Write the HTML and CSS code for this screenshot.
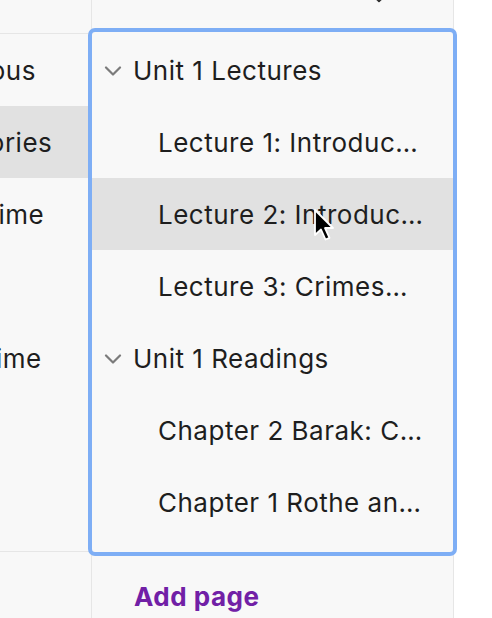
FILE: index.html
```html
<!DOCTYPE html>
<html>
<head>
<meta charset="utf-8">
<link rel="stylesheet" href="styles.css">
</head>
<body>
<div class="screen">
  <div class="left">
    <div class="left-inner">
      <div class="left-head"></div>
      <div class="left-list">
        <div class="left-row">Various</div>
        <div class="left-row active">Theories</div>
        <div class="left-row">Anytime</div>
        <div class="left-row"></div>
        <div class="left-row">Lifetime</div>
        <div class="left-row"></div>
        <div class="left-row"></div>
      </div>
    </div>
  </div>
  <div class="middle">
    <div class="mid-head">
      <svg class="sort-icon" width="16" height="12" viewBox="0 0 16 12"><path d="M8 -6 V5 M3 0 L8 5 L13 0" fill="none" stroke="#333" stroke-width="2.4" stroke-linecap="round" stroke-linejoin="round"/></svg>
    </div>
    <div class="tree">
      <div class="group">
        <svg class="chev" width="18" height="10" viewBox="0 0 18 10"><path d="M2 1.5 L9 8.5 L16 1.5" fill="none" stroke="#7b7b7b" stroke-width="2.2" stroke-linecap="round" stroke-linejoin="round"/></svg>
        <span class="label">Unit 1 Lectures</span>
      </div>
      <div class="item"><span class="label">Lecture 1: Introduction to Criminology</span></div>
      <div class="item hover"><span class="label">Lecture 2: Introduction to Theory</span>
        <svg class="cursor" width="22" height="34" viewBox="0 0 22 34"><path d="M2 2 L2 27 L8 21.5 L12.5 31.5 L16.5 29.8 L12 20 L20 20 Z" fill="#000" stroke="#fff" stroke-width="1.8" stroke-linejoin="round"/></svg>
      </div>
      <div class="item"><span class="label">Lecture 3: Crimes—Definitions and Measurement</span></div>
      <div class="group">
        <svg class="chev" width="18" height="10" viewBox="0 0 18 10"><path d="M2 1.5 L9 8.5 L16 1.5" fill="none" stroke="#7b7b7b" stroke-width="2.2" stroke-linecap="round" stroke-linejoin="round"/></svg>
        <span class="label">Unit 1 Readings</span>
      </div>
      <div class="item"><span class="label">Chapter 2 Barak: Criminology</span></div>
      <div class="item"><span class="label">Chapter 1 Rothe and Kauzlarich</span></div>
    </div>
    <div class="add"><span class="add-link">Add page</span></div>
  </div>
  <div class="right"></div>
</div>
</body>
</html>
```

FILE: styles.css
```css
* { box-sizing: border-box; }
html, body { margin: 0; padding: 0; }
body {
  width: 492px;
  height: 618px;
  overflow: hidden;
  background: #ffffff;
  font-family: Inter, "Noto Sans", sans-serif;
  color: #1e1e1e;
}
.screen {
  display: flex;
  height: 618px;
}
.left {
  width: 91px;
  flex: none;
  overflow: hidden;
  background: #f8f8f8;
}
.left-inner {
  width: 200px;
  margin-left: -76px;
}
.left-head {
  height: 34px;
  border-bottom: 1px solid #e6e6e6;
}
.left-list {
  height: 518px;
  border-bottom: 1px solid #e6e6e6;
  overflow: hidden;
}
.left-row {
  height: 72px;
  display: flex;
  align-items: center;
  padding-left: 16px;
  font-size: 26px;
  letter-spacing: 0.5px;
  white-space: nowrap;
}
.left-row.active { background: #e1e1e1; }
.middle {
  width: 363px;
  flex: none;
  background: #f8f8f8;
  border-left: 1px solid #e6e6e6;
  border-right: 1px solid #e6e6e6;
  display: flex;
  flex-direction: column;
}
.mid-head {
  height: 32px;
  position: relative;
}
.sort-icon {
  position: absolute;
  left: 279px;
  top: -4px;
}
.tree {
  height: 520px;
  padding-top: 2px;
  outline: 4px solid #7eaef5;
  border-radius: 3px;
  position: relative;
  z-index: 1;
  background: #f8f8f8;
}
.group, .item {
  height: 72px;
  display: flex;
  align-items: center;
  font-size: 26px;
  letter-spacing: 0.5px;
  white-space: nowrap;
  position: relative;
}
.group { padding-left: 12px; }
.chev { flex: none; margin-right: 11px; margin-top: 1px; }
.item { padding-left: 66px; padding-right: 28px; }
.item.hover { background: #e1e1e1; }
.label {
  overflow: hidden;
  text-overflow: ellipsis;
  min-width: 0;
}
.cursor {
  position: absolute;
  left: 221px;
  top: 30px;
}
.add {
  flex: 1;
  padding-left: 42px;
  padding-top: 29px;
}
.add-link {
  color: #7120a6;
  font-weight: 700;
  font-size: 26px;
  letter-spacing: 0.5px;
}
.right {
  flex: 1;
  background: #ffffff;
}
```
